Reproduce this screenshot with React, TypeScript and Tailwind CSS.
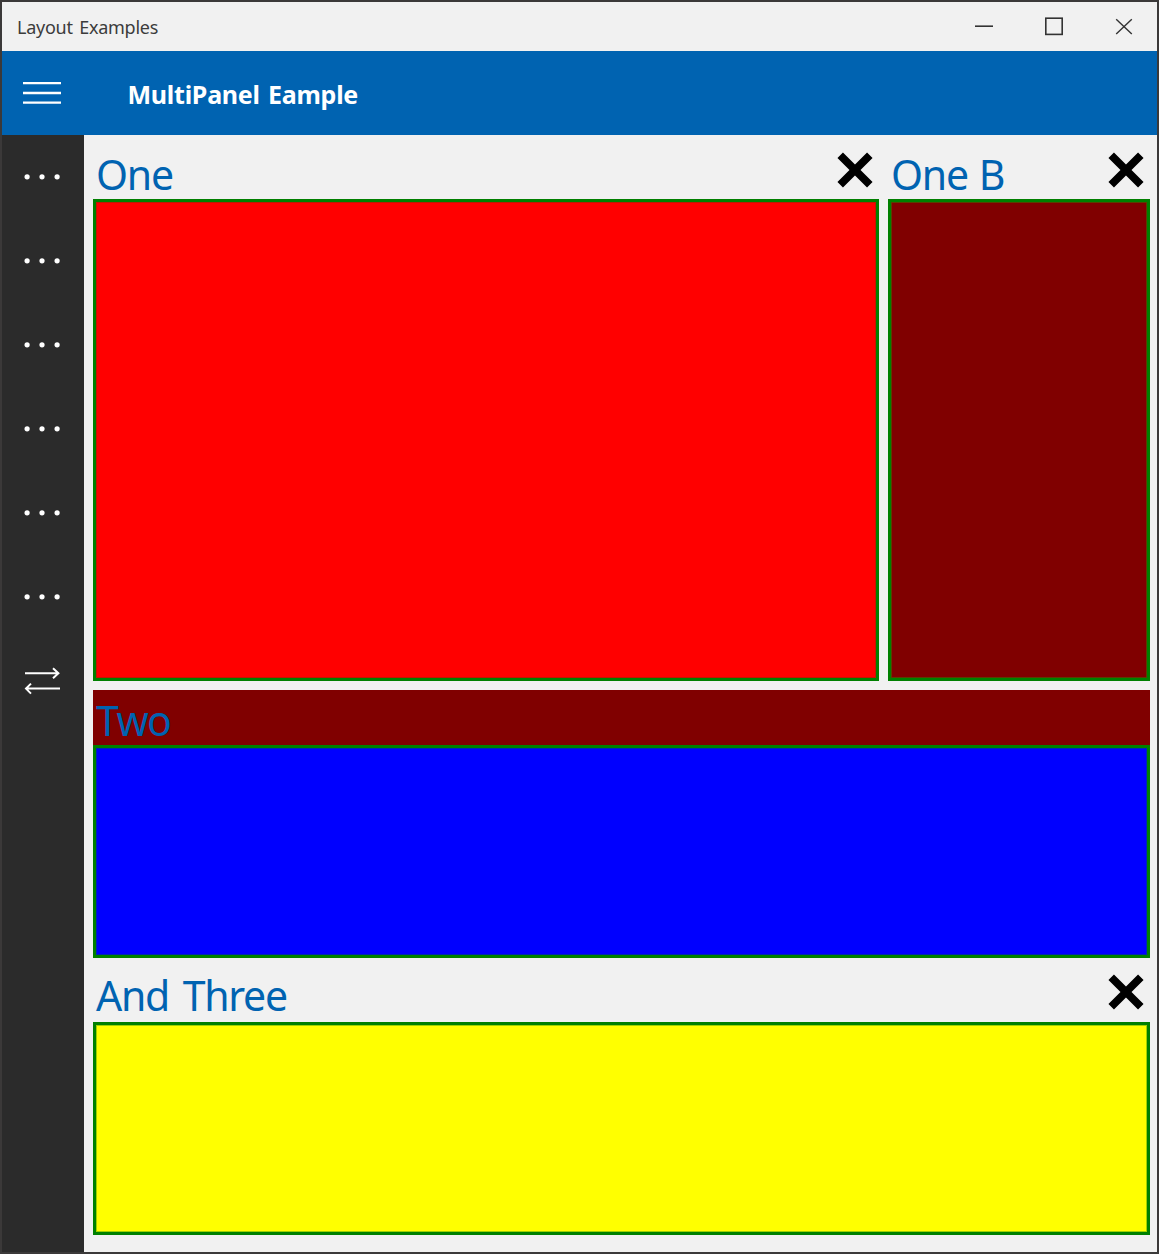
import React from "react";

function CloseMark({ offset }: { offset: string }) {
  return (
    <svg width="36" height="36" viewBox="0 0 36 36" className={`mr-[6.5px] shrink-0 ${offset}`} fill="none" stroke="#000" strokeWidth="7.8">
      <path d="M3.2 3.2L32.8 32.8M32.8 3.2L3.2 32.8" />
    </svg>
  );
}

interface PanelProps {
  title: string;
  text: string;
  header?: string;
  box: string;
  line: string;
  closable?: boolean;
  markOffset?: string;
  className?: string;
}

function Panel({ title, text, header = "", box, line, closable = true, markOffset = "mt-2", className = "" }: PanelProps) {
  return (
    <section className={`flex flex-col ${className}`}>
      <div className={`flex h-[55px] shrink-0 justify-between pl-[3px] ${header}`}>
        <h2 className={`text-[41px] whitespace-nowrap text-[#0063b1] ${text}`}>{title}</h2>
        {closable && <CloseMark offset={markOffset} />}
      </div>
      <div className="flex grow border-3 border-[#008000]">
        <div className={`grow border ${box} ${line}`} />
      </div>
    </section>
  );
}

function Dots() {
  return (
    <div className="flex h-[84px] items-center pl-[22px]">
      <svg width="38" height="8" viewBox="0 0 38 8" fill="#fff">
        <circle cx="3.1" cy="3.8" r="2.6" />
        <circle cx="18" cy="3.8" r="2.6" />
        <circle cx="33.1" cy="3.8" r="2.6" />
      </svg>
    </div>
  );
}

export default function App() {
  return (
    <div className="flex h-[1254px] w-[1159px] flex-col overflow-hidden border-2 border-[#3b3939] bg-[#f1f1f1] font-['Noto_Sans',sans-serif]">
      <header className="flex h-[49px] shrink-0 items-center justify-between pl-[15px]">
        <h1 className="pt-px text-[18px] leading-6 tracking-[-0.25px] text-[#3c3c3c] [word-spacing:2px]">Layout Examples</h1>
        <div className="flex">
          <svg width="70" height="49" viewBox="0 0 70 49" fill="none" stroke="#333" strokeWidth="1.6">
            <path d="M20 24.2H38" />
          </svg>
          <svg width="70" height="49" viewBox="0 0 70 49" fill="none" stroke="#333" strokeWidth="1.6">
            <rect x="20.8" y="16.2" width="16.4" height="16.2" />
          </svg>
          <svg width="62" height="49" viewBox="0 0 62 49" fill="none" stroke="#333" strokeWidth="1.4">
            <path d="M21.2 17.2L36.8 32M36.8 17.2L21.2 32" />
          </svg>
        </div>
      </header>
      <div className="flex h-[84px] shrink-0 items-center bg-[#0063b1] pl-[21px]">
        <svg width="38" height="24" viewBox="0 0 38 24" stroke="#fff" strokeWidth="2.3">
          <path d="M0 2.2H38M0 12H38M0 21.6H38" />
        </svg>
        <div className="pt-1 pl-[66.5px] text-[25px] font-bold tracking-[-0.25px] text-white [word-spacing:2px]">MultiPanel Eample</div>
      </div>
      <div className="flex grow">
        <nav className="w-[82px] shrink-0 bg-[#2b2b2b]">
          <Dots />
          <Dots />
          <Dots />
          <Dots />
          <Dots />
          <Dots />
          <div className="flex h-[84px] items-center pl-[22px]">
            <svg width="38" height="28" viewBox="0 0 38 28" fill="none" stroke="#fff" strokeWidth="2">
              <path d="M1 6.2H35M29 1.2L34.4 6.2L29 11.2M36 21.6H2M7 16.6L2 21.6L7 26.6" />
            </svg>
          </div>
        </nav>
        <main className="flex grow flex-col gap-[9px] pt-[9px] pr-[7px] pb-[17px] pl-[9px]">
          <div className="flex h-[537px] gap-[9px]">
            <Panel title="One" text="leading-[60px] tracking-[-1.2px]" box="bg-[#ff0000]" line="border-[#c01800]" className="w-[786px]" />
            <Panel title="One B" text="leading-[60px] tracking-[-1.2px] [word-spacing:1.5px]" box="bg-[#800000]" line="border-[#594000]" className="w-[262px]" />
          </div>
          <Panel title="Two" text="leading-[60px] tracking-[-1.6px]" header="bg-[#800000]" box="bg-[#0000ff]" line="border-[#0028b0]" closable={false} className="h-[268px]" />
          <Panel title="And Three" text="leading-[57px] tracking-[-1.3px] [word-spacing:4.5px]" box="bg-[#ffff00]" line="border-[#a0d000]" markOffset="mt-[7.3px]" className="h-[268px]" />
        </main>
      </div>
    </div>
  );
}
